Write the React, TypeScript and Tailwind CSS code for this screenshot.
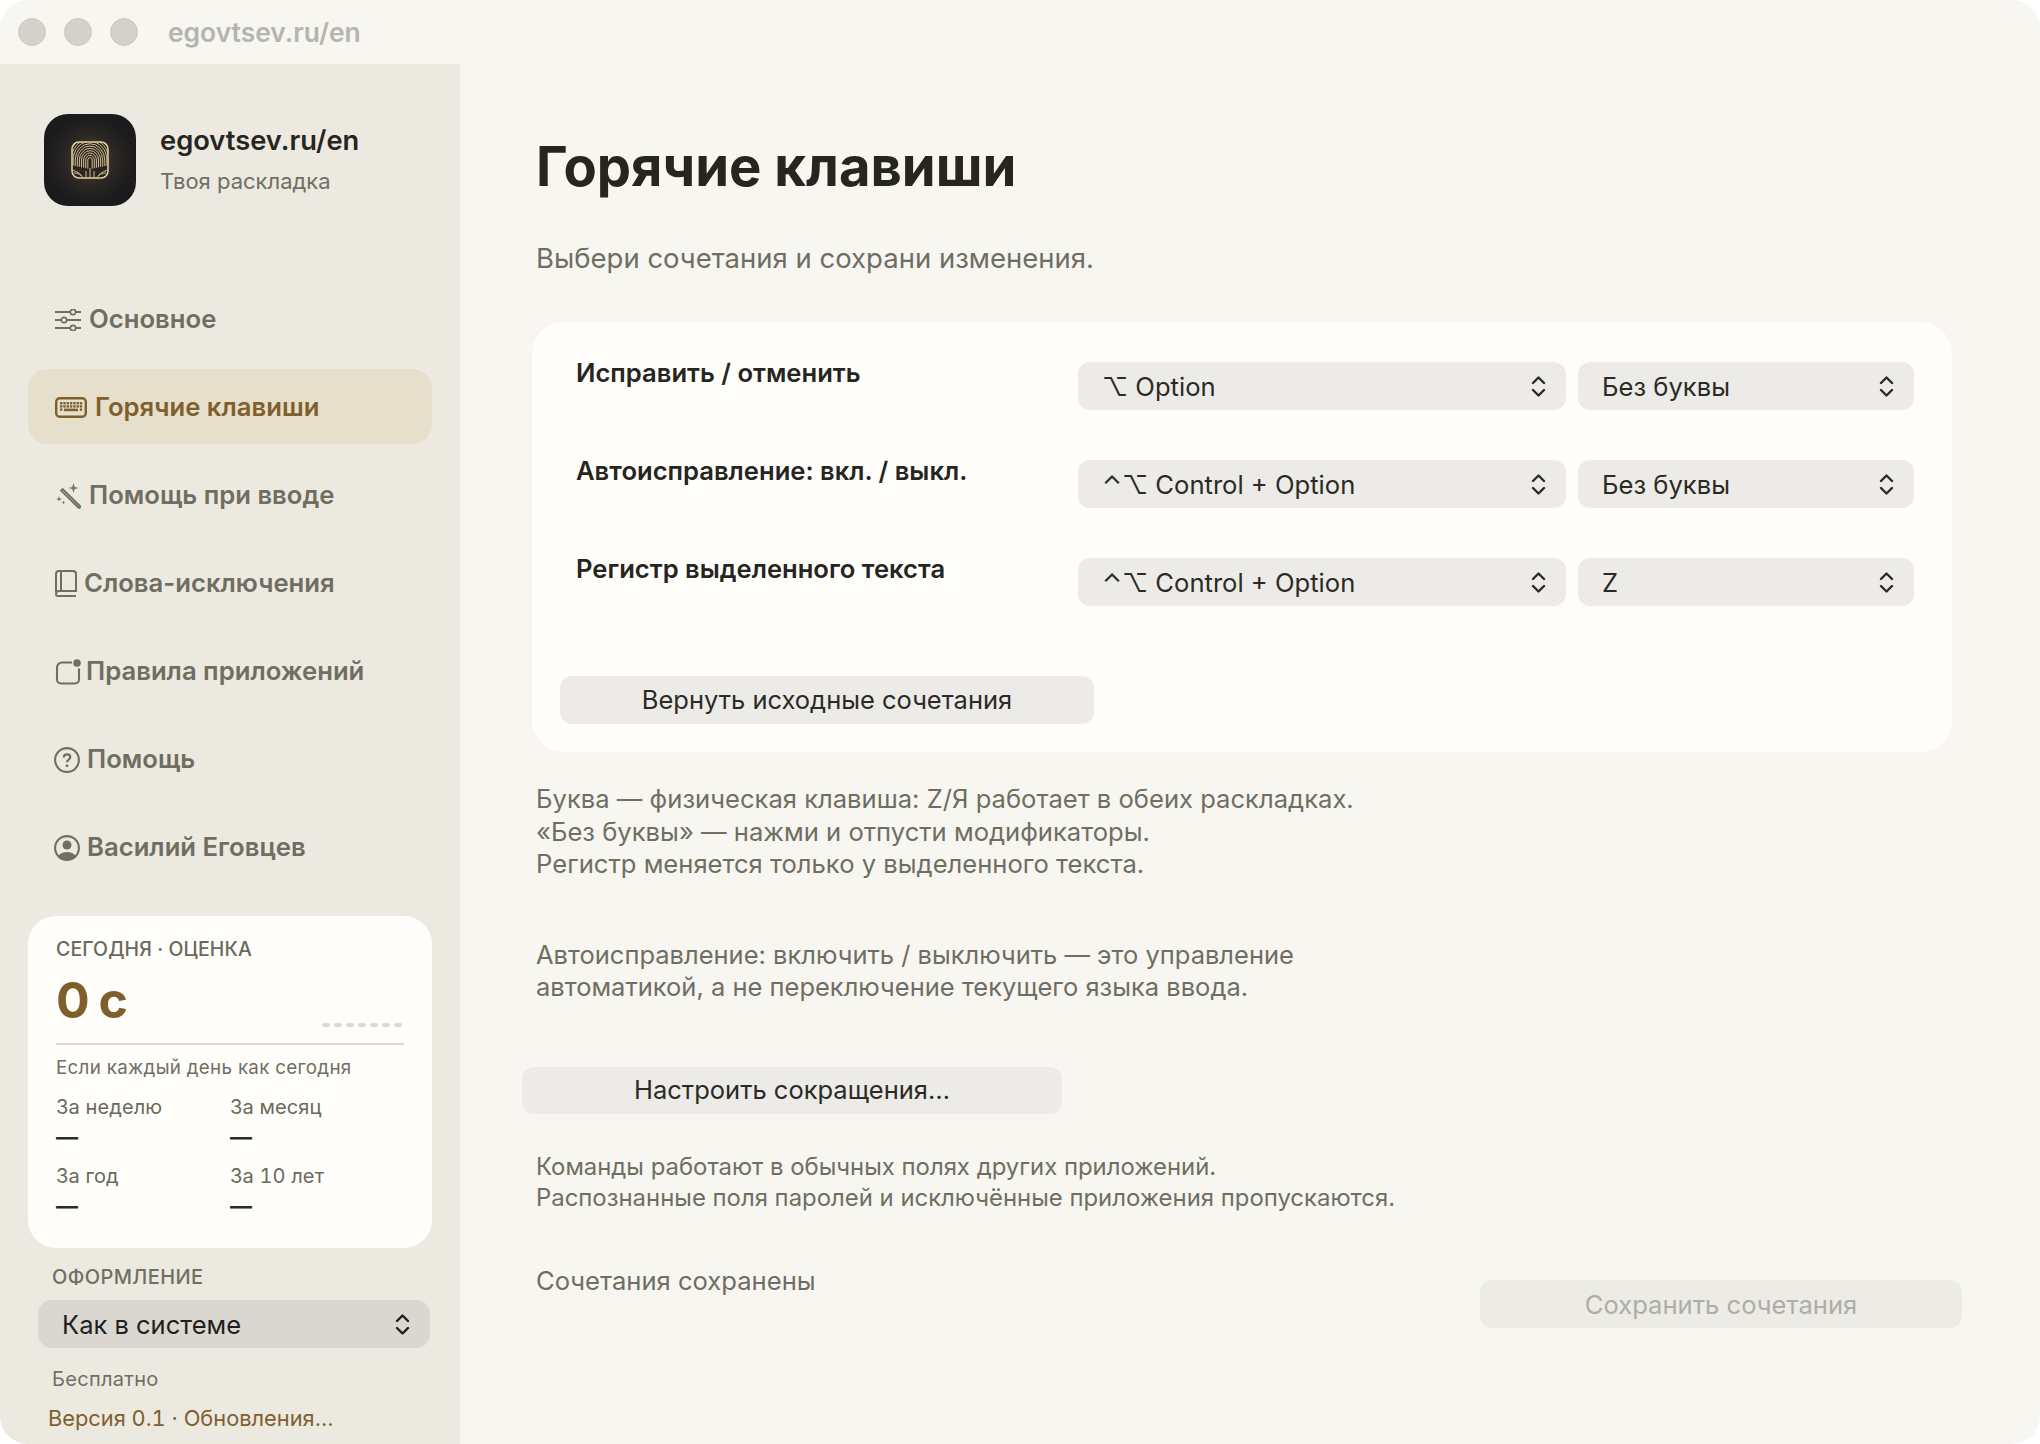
import type { ReactNode } from "react";

const FONT = "font-['Inter','Noto_Sans','DejaVu_Sans',sans-serif]";

function SlidersIcon() {
  return (
    <svg viewBox="0 0 26 22" className="h-[22px] w-[26px]" fill="none" stroke="currentColor" strokeWidth="2">
      <path d="M0 3h15M21 3h5M0 11h6M12 11h14M0 19h15M21 19h5" />
      <circle cx="18" cy="3" r="2.7" strokeWidth="1.700" />
      <circle cx="9" cy="11" r="2.7" strokeWidth="1.700" />
      <circle cx="18" cy="19" r="2.7" strokeWidth="1.700" />
    </svg>
  );
}

function KeyboardIcon() {
  const keys: number[][] = [];
  for (let row = 0; row < 3; row++) {
    for (let col = 0; col < 7; col++) {
      if (row === 2 && col > 0 && col < 6) continue;
      keys.push([5 + col * 3.3, 5 + row * 3.2]);
    }
  }
  return (
    <svg viewBox="0 0 32 21" className="h-[21px] w-[32px]" fill="none">
      <rect x="1.200" y="1.200" width="29.600" height="18.600" rx="3.500" stroke="currentColor" strokeWidth="2.400" />
      {keys.map(([x, y]) => (
        <rect key={`${x}-${y}`} x={x} y={y} width="2.400" height="2.400" fill="currentColor" />
      ))}
      <rect x="9" y="11.600" width="14" height="2.600" fill="currentColor" />
    </svg>
  );
}

function WandIcon() {
  return (
    <svg viewBox="0 0 26 26" className="h-[26px] w-[26px]" fill="currentColor">
      <path d="M6 7.600l1.600-1.600 17.300 17c.5.500.4 1-.1 1.500-.5.500-1 .5-1.500 0z" fill="none" stroke="currentColor" strokeWidth="1.800" />
      <path d="M18.500 0l1.100 3.900 4 1.100-4 1.100-1.100 3.900-1.100-3.900-4-1.100 4-1.100z" />
      <path d="M4 13l.7 2.300 2.300.7-2.300.7-.7 2.300-.7-2.300-2.300-.7 2.300-.7z" />
      <path d="M8.500 17.500l.5 1.500 1.500.5-1.500.5-.5 1.500-.5-1.500-1.500-.5 1.500-.5z" />
    </svg>
  );
}

function BookIcon() {
  return (
    <svg viewBox="0 0 22 27" className="h-[27px] w-[22px]" fill="none" stroke="currentColor" strokeWidth="2">
      <path d="M1 22V4a3 3 0 0 1 3-3h14a3 3 0 0 1 3 3v17H4a3 3 0 0 0-3 3 2 2 0 0 0 2 2h18" />
      <path d="M6 1v20" />
    </svg>
  );
}

function AppIcon() {
  return (
    <svg viewBox="0 0 26 26" className="h-[26px] w-[26px]" fill="none" stroke="currentColor" strokeWidth="2.100">
      <path d="M17 3.500H7a5 5 0 0 0-5 5v12a4 4 0 0 0 4 4h14a4 4 0 0 0 4-4v-11" />
      <circle cx="22" cy="4" r="3.800" fill="currentColor" stroke="none" />
    </svg>
  );
}

function HelpIcon() {
  return (
    <svg viewBox="0 0 26 26" className="-ml-px h-[26px] w-[26px]" fill="none" stroke="currentColor" strokeWidth="2.100">
      <circle cx="13" cy="13" r="11.900" />
      <path d="M9.800 10.500c0-2 1.400-3.200 3.300-3.200s3.200 1.200 3.200 2.800c0 2.600-3.300 2.500-3.300 5.200" strokeWidth="2.200" />
      <circle cx="13" cy="18.800" r="1.400" fill="currentColor" stroke="none" />
    </svg>
  );
}

function PersonIcon() {
  return (
    <svg viewBox="0 0 26 26" className="-ml-px h-[26px] w-[26px]" fill="none">
      <circle cx="13" cy="13" r="11.900" stroke="currentColor" strokeWidth="2.100" />
      <circle cx="13" cy="10" r="4.500" fill="currentColor" />
      <path d="M4.200 21c2-2.800 5-4 8.800-4s6.800 1.200 8.800 4c-2.200 2.500-5.200 4-8.800 4s-6.600-1.500-8.800-4z" fill="currentColor" />
    </svg>
  );
}

function Chevrons() {
  return (
    <svg viewBox="0 0 15 21" className="h-[21px] w-[15px] shrink-0" fill="none" stroke="currentColor" strokeWidth="2.400" strokeLinecap="round" strokeLinejoin="round">
      <path d="M2 7l5.500-5.500L13 7M2 14l5.500 5.500L13 14" />
    </svg>
  );
}

// ridges of the fingerprint, arches around the core with a few broken lines at the bottom
function FingerprintLogo() {
  const rings = [2.200, 4.300, 6.400, 8.500, 10.600, 12.700, 14.800, 16.900, 19, 21.100, 23.200];
  return (
    <svg viewBox="0 0 38 38" className="h-[38px] w-[38px]" fill="none">
      <defs>
        <clipPath id="print">
          <rect x="1" y="1" width="36" height="36" rx="7" />
        </clipPath>
      </defs>
      <rect x="1" y="1" width="36" height="36" rx="7" fill="#2a2620" />
      <g clipPath="url(#print)" stroke="#dcc496" strokeWidth="0.950">
        {rings.map((r) => (
          <path key={r} d={`M${19 - r} ${28 - r * 0.2}V19a${r} ${r * 1.100} 0 0 1 ${r * 2} 0V${28 - r * 0.2}`} />
        ))}
        <path d="M-2 28c6 2 10 3 13 7M40 28c-6 2-10 3-13 7M3 32c4 0 8 2 10 6M35 32c-4 0-8 2-10 6M15 30v8M19 27v11M23 30v8" />
      </g>
      <rect x="1" y="1" width="36" height="36" rx="7" stroke="#e6d0a4" strokeWidth="1.500" />
    </svg>
  );
}

interface NavItem {
  label: string;
  icon: ReactNode;
  gap: string;
  active?: boolean;
}

const NAV: NavItem[] = [
  { label: "Основное", icon: <SlidersIcon />, gap: "gap-2" },
  { label: "Горячие клавиши", icon: <KeyboardIcon />, gap: "gap-2", active: true },
  { label: "Помощь при вводе", icon: <WandIcon />, gap: "gap-2" },
  { label: "Слова-исключения", icon: <BookIcon />, gap: "gap-[7px]" },
  { label: "Правила приложений", icon: <AppIcon />, gap: "gap-[5px]" },
  { label: "Помощь", icon: <HelpIcon />, gap: "gap-[7px]" },
  { label: "Василий Еговцев", icon: <PersonIcon />, gap: "gap-[7px]" },
];

const STATS = [
  ["За неделю", "За месяц"],
  ["За год", "За 10 лет"],
];

function Sidebar() {
  return (
    <aside className="flex h-[1380px] w-[460px] shrink-0 flex-col bg-[#ece9e1] pt-[50px]">
      <div className="flex items-center gap-6 pl-11">
        <div className="flex h-[92px] w-[92px] items-center justify-center rounded-[24px] bg-[radial-gradient(circle,#4d4436_0%,#2a2723_40%,#1b1a1d_68%)]">
          <FingerprintLogo />
        </div>
        <div className="-mt-[2px]">
          <p className="text-[27.300px] leading-[36px] font-semibold text-[#26251f]">egovtsev.ru/en</p>
          <p className="mt-2 text-[22px] leading-[28px] font-[430] text-[#706f63]">Твоя раскладка</p>
        </div>
      </div>

      <nav className="mx-7 mt-[75px] flex flex-col gap-[13px]">
        {NAV.map((item) => (
          <div
            key={item.label}
            className={`flex h-[75px] items-center pt-0.5 pl-[27px] text-[25.700px] font-[560] ${item.gap} ${
              item.active ? "rounded-[20px] bg-[#e6dfcb] text-[#7f5f2d]" : "text-[#6f6e60]"
            }`}
          >
            {item.icon}
            <span>{item.label}</span>
          </div>
        ))}
      </nav>

      <section className="mx-7 mt-8 h-[332px] rounded-[28px] bg-[#fffefa] px-7 pt-5">
        <p className="text-[19.500px] leading-[26px] font-medium tracking-[0.1px] text-[#6a695d]">СЕГОДНЯ · ОЦЕНКА</p>
        <div className="mt-2 flex h-[60px] items-end justify-between">
          <span className="text-[50px] leading-[60px] font-bold tracking-[-1.500px] text-[#7f5f2d]">0 с</span>
          <div className="mb-[3px] flex gap-1 pr-0.5">
            {[0, 1, 2, 3, 4, 5, 6].map((i) => (
              <span key={i} className="h-1 w-2 rounded-full bg-[#ddd9ce]" />
            ))}
          </div>
        </div>
        <div className="mt-[13px] h-0.5 bg-[#ddd8cc]" />
        <p className="mt-2.5 text-[18.800px] leading-[26px] font-[430] tracking-[0.3px] text-[#6f6e62]">Если каждый день как сегодня</p>
        <div className="mt-[13px] flex flex-col gap-[11px]">
          {STATS.map((row) => (
            <div key={row[0]} className="grid grid-cols-[174px_1fr]">
              {row.map((label) => (
                <div key={label}>
                  <p className="text-[20px] leading-[26px] font-[430] tracking-[0.15px] text-[#6a695d] tabular-nums">{label}</p>
                  <p className="mt-0.5 text-[22px] leading-[30px] font-bold text-[#2b2a25]">—</p>
                </div>
              ))}
            </div>
          ))}
        </div>
      </section>

      <p className="mt-4 pl-[52px] text-[20px] leading-[26px] font-medium tracking-[0.4px] text-[#706f63]">ОФОРМЛЕНИЕ</p>
      <div className="mx-[38px] mt-[10px] flex h-[48px] w-[392px] items-center justify-between rounded-[14px] bg-[#d9d7d0] pr-[20px] pl-[24px] text-[25.500px] font-[430] text-[#1f1e1b]">
        <span className="pt-0.5">Как в системе</span>
        <Chevrons />
      </div>
      <p className="mt-[18px] pl-[52px] text-[20px] leading-[26px] font-[430] tracking-[0.3px] text-[#706f63]">Бесплатно</p>
      <p className="mt-3 pl-[48px] text-[21.800px] leading-[28px] font-[430] text-[#7f5f2d] tabular-nums">Версия 0.1 · Обновления…</p>
    </aside>
  );
}

function Select({ value, width }: { value: string; width: string }) {
  return (
    <div className={`flex h-12 items-center justify-between rounded-xl bg-[#ecebe7] pr-[20px] pl-6 text-[25.600px] font-[430] text-[#2b2a25] ${width}`}>
      <span className="pt-0.5">{value}</span>
      <Chevrons />
    </div>
  );
}

const ROWS = [
  { label: "Исправить / отменить", mod: "⌥ Option", key: "Без буквы" },
  { label: "Автоисправление: вкл. / выкл.", mod: "⌃⌥ Control + Option", key: "Без буквы" },
  { label: "Регистр выделенного текста", mod: "⌃⌥ Control + Option", key: "Z" },
];

export default function App() {
  return (
    <div className={`h-[1444px] w-[2040px] bg-white ${FONT}`}>
      <div className="h-full w-full overflow-hidden rounded-[28px] bg-[#f7f6f1]">
        <header className="flex h-16 items-center pl-[18px]">
          <div className="flex gap-[18px]">
            <span className="h-7 w-7 rounded-full border border-[#c8c7c0] bg-[#d2d1cb]" />
            <span className="h-7 w-7 rounded-full border border-[#c8c7c0] bg-[#d2d1cb]" />
            <span className="h-7 w-7 rounded-full border border-[#c8c7c0] bg-[#d2d1cb]" />
          </div>
          <span className="ml-[30px] pt-0.5 text-[26.400px] font-semibold text-[#b5b4ae]">egovtsev.ru/en</span>
        </header>

        <div className="flex">
          <Sidebar />
          <main className="flex-1 pt-[68px] pr-[78px] pl-[76px] font-[430]">
            <h1 className="text-[54.400px] leading-[68px] font-bold text-[#26251f]">Горячие клавиши</h1>
            <p className="mt-[42px] text-[27.500px] leading-[32px] text-[#6f6e62]">Выбери сочетания и сохрани изменения.</p>

            <section className="mt-12 -ml-1 h-[430px] w-[1420px] rounded-[32px] bg-[#fffefa] px-7 pt-10">
              <div className="flex flex-col gap-[50px]">
                {ROWS.map((row) => (
                  <div key={row.label} className="flex items-start pl-4">
                    <p className="-mt-[5px] w-[502px] text-[25.600px] leading-[32px] font-semibold text-[#26251f]">{row.label}</p>
                    <Select value={row.mod} width="w-[488px]" />
                    <Select value={row.key} width="ml-3 w-[336px]" />
                  </div>
                ))}
              </div>
              <button className="mt-[70px] h-12 w-[534px] rounded-xl bg-[#ecebe7] pt-px text-center text-[25.500px] text-[#2b2a25]">
                Вернуть исходные сочетания
              </button>
            </section>

            <div className="mt-[31px] text-[25.600px] leading-[32.500px] text-[#6f6e62]">
              <p>Буква — физическая клавиша: Z/Я работает в обеих раскладках.</p>
              <p>«Без буквы» — нажми и отпусти модификаторы.</p>
              <p>Регистр меняется только у выделенного текста.</p>
            </div>

            <div className="mt-[58px] text-[25.500px] leading-[32.500px] text-[#6f6e62]">
              <p>Автоисправление: включить / выключить — это управление</p>
              <p>автоматикой, а не переключение текущего языка ввода.</p>
            </div>

            <button className="mt-[63px] -ml-[14px] block h-[47px] w-[540px] rounded-xl bg-[#ecebe7] pt-px text-center text-[25.500px] text-[#2b2a25]">
              Настроить сокращения…
            </button>

            <div className="mt-[37px] text-[23.900px] leading-[31px] text-[#6f6e62]">
              <p>Команды работают в обычных полях других приложений.</p>
              <p>Распознанные поля паролей и исключённые приложения пропускаются.</p>
            </div>

            <div className="mt-[52px] flex items-start justify-between">
              <p className="text-[25.600px] leading-[32px] text-[#6f6e62]">Сочетания сохранены</p>
              <button className="mt-[15px] h-12 w-[482px] rounded-xl bg-[#ecebe6] pt-[3px] text-center text-[25.600px] text-[#aeada6]">
                Сохранить сочетания
              </button>
            </div>
          </main>
        </div>
      </div>
    </div>
  );
}
